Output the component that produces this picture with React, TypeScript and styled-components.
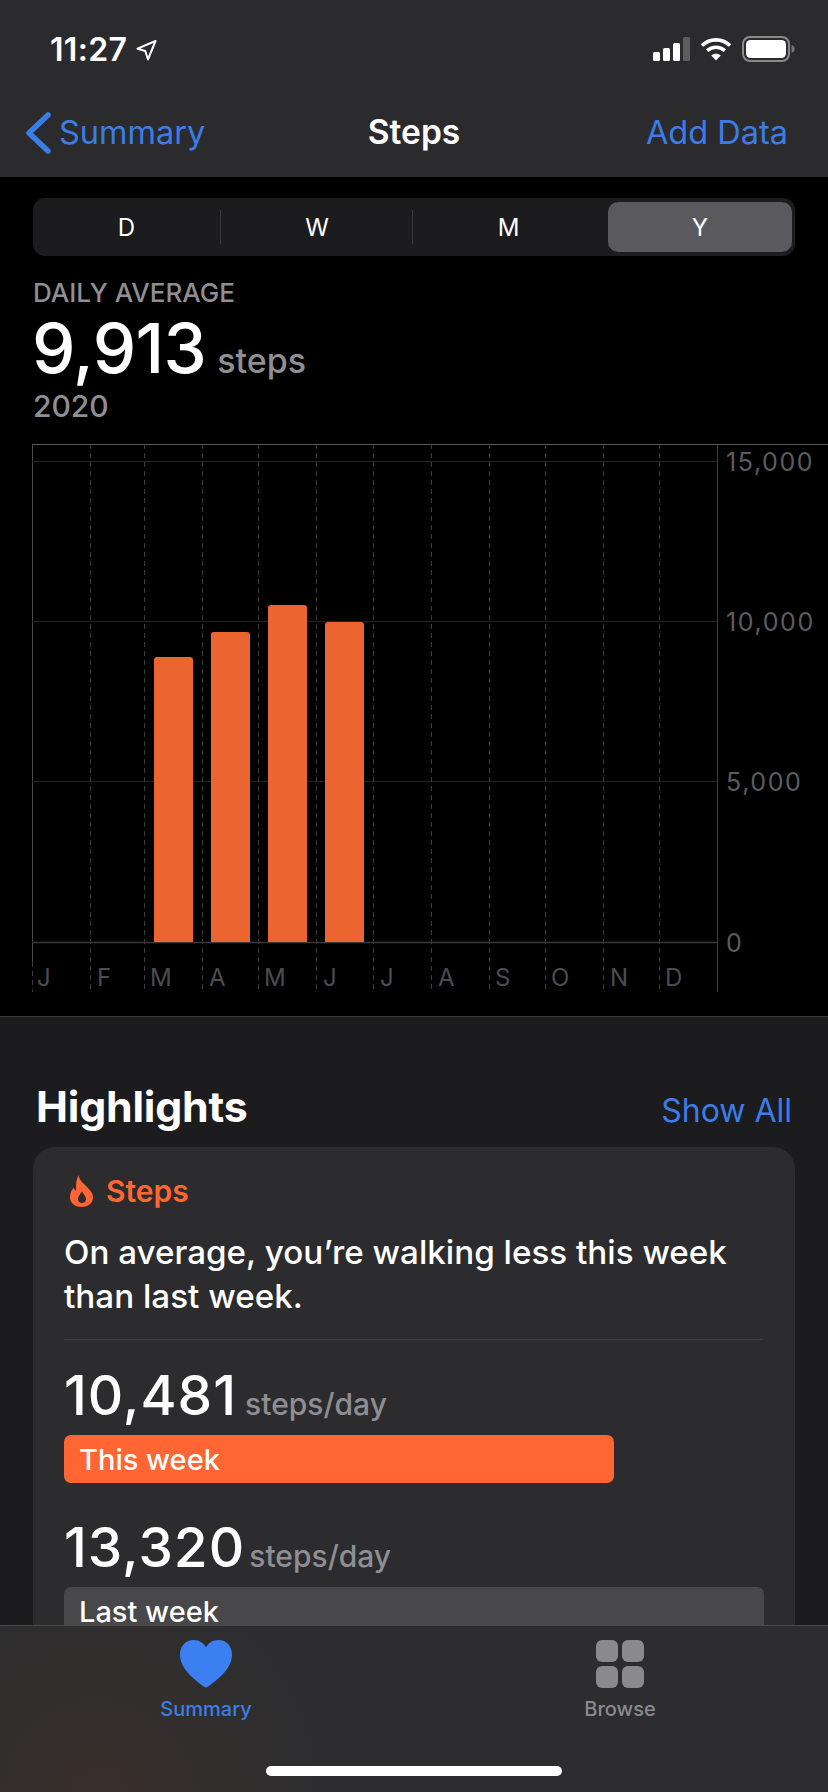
import { createGlobalStyle, styled } from "styled-components";

const sans = `Inter, "Noto Sans", "Liberation Sans", sans-serif`;
const blue = "#3b7de6";
const orange = "#ff6633";

const GlobalStyle = createGlobalStyle`
	html, body {
		margin: 0;
		padding: 0;
		background: #1c1c1e;
	}
	* {
		box-sizing: border-box;
	}
`;

const Screen = styled.div`
	position: relative;
	width: 828px;
	height: 1792px;
	overflow: hidden;
	background: #1c1c1e;
	color: #fff;
	font-family: ${sans};
`;

const Header = styled.header`
	height: 177px;
	background: #2b2b2d;
`;

const StatusBar = styled.div`
	height: 88px;
	padding: 36px 33px 0 50px;
	display: flex;
	justify-content: space-between;
	align-items: flex-start;
`;

const TimeGroup = styled.div`
	display: flex;
	align-items: center;
	gap: 9px;
`;

const Time = styled.span`
	font-size: 32px;
	line-height: 28px;
	font-weight: 600;
	letter-spacing: 0.3px;
`;

const StatusIcons = styled.div`
	display: flex;
	align-items: center;
	gap: 10px;
`;

const NavBar = styled.nav`
	height: 89px;
	padding: 0 25px;
	display: grid;
	grid-template-columns: 1fr auto 1fr;
	align-items: center;
`;

const BackLink = styled.div`
	display: flex;
	align-items: center;
	gap: 8px;
	color: ${blue};
	font-size: 32.5px;
`;

const NavTitle = styled.div`
	padding-bottom: 2px;
	font-size: 33.5px;
	font-weight: 600;
`;

const NavAction = styled.div`
	justify-self: end;
	margin-right: 15px;
	color: ${blue};
	font-size: 32.5px;
`;

const ChartSection = styled.section`
	height: 840px;
	background: #000;
	padding-top: 21px;
	border-bottom: 1px solid #3a3a3c;
`;

const Segmented = styled.div`
	width: 762px;
	height: 58px;
	margin-left: 33px;
	padding: 4px 3px;
	display: grid;
	grid-template-columns: 185px 192px 195px 184px;
	background: #1c1c1e;
	border-radius: 12px;
`;

const Segment = styled.div<{ $active?: boolean; $divided?: boolean; $inset?: number }>`
	position: relative;
	display: flex;
	align-items: center;
	justify-content: center;
	padding-right: ${(p) => p.$inset ?? 0}px;
	font-size: 24px;
	font-weight: 400;
	border-radius: 10px;
	background: ${(p) => (p.$active ? "#5a5a5e" : "transparent")};

	${(p) =>
		p.$divided &&
		`&::after {
			content: "";
			position: absolute;
			right: 0;
			top: 8px;
			bottom: 8px;
			width: 1px;
			background: #3a3a3c;
		}`}
`;

const AverageBlock = styled.div`
	padding: 22px 0 0 33px;
`;

const AverageLabel = styled.div`
	color: #8e8e93;
	font-size: 26px;
	line-height: 30px;
	font-weight: 550;
`;

const AverageRow = styled.div`
	display: flex;
	align-items: baseline;
	gap: 11px;
	height: 80px;
	padding-top: 6px;
`;

const AverageValue = styled.span`
	margin-left: -1px;
	font-size: 69px;
	line-height: 68px;
	font-weight: 450;
	letter-spacing: -0.6px;
`;

const AverageUnit = styled.span`
	color: #8e8e93;
	font-size: 34px;
	font-weight: 500;
`;

const AverageYear = styled.div`
	color: #8e8e93;
	font-size: 30px;
	line-height: 36px;
	font-weight: 500;
`;

const ChartSvg = styled.svg`
	display: block;
	margin-top: 20px;
`;

const AxisText = styled.text`
	fill: #5c5c60;
	font-family: ${sans};
	font-size: 25px;
	letter-spacing: 1.6px;
`;

const MonthText = styled.text`
	fill: #4c4c50;
	font-family: ${sans};
	font-size: 24px;
`;

const Highlights = styled.section`
	padding: 64px 33px 0;
`;

const HighlightsHead = styled.div`
	display: flex;
	justify-content: space-between;
	align-items: flex-start;
	padding: 0 3px;
	height: 66px;
`;

const HighlightsTitle = styled.h2`
	margin: 0;
	font-size: 42.8px;
	line-height: 52px;
	font-weight: 700;
	letter-spacing: -0.2px;
`;

const ShowAll = styled.div`
	margin-top: 4px;
	color: ${blue};
	font-size: 32px;
	line-height: 52px;
`;

const Card = styled.article`
	height: 600px;
	padding: 27px 32px 0 31px;
	background: #2c2c2e;
	border-radius: 22px;
`;

const CardHead = styled.div`
	display: flex;
	align-items: center;
	gap: 12px;
	padding-left: 6px;
	color: ${orange};
	font-size: 30px;
	line-height: 34px;
	font-weight: 600;
`;

const CardText = styled.p`
	margin: 22px 0 0;
	padding-bottom: 21px;
	border-bottom: 1px solid #3f3f41;
	font-size: 33.2px;
	line-height: 44px;
	font-weight: 500;
`;

const Metric = styled.div<{ $gap: number }>`
	display: flex;
	align-items: baseline;
	gap: ${(p) => p.$gap}px;
	height: 65px;
`;

const MetricValue = styled.span`
	font-size: 55px;
	line-height: 64px;
	font-weight: 500;
	letter-spacing: 1px;
`;

const MetricUnit = styled.span`
	color: #8e8e93;
	font-size: 30px;
	font-weight: 500;
`;

const MetricGroup = styled.div<{ $gap: number }>`
	margin-top: ${(p) => p.$gap}px;
`;

const WeekBar = styled.div<{ $width: number; $color: string }>`
	width: ${(p) => p.$width}px;
	height: 48px;
	margin-top: 7px;
	padding-left: 15px;
	display: flex;
	align-items: center;
	background: ${(p) => p.$color};
	border-radius: 7px;
	font-size: 29px;
	font-weight: 500;
`;

const TabBar = styled.nav`
	position: absolute;
	left: 0;
	right: 0;
	bottom: 0;
	height: 167px;
	padding-top: 14px;
	display: grid;
	grid-template-columns: 412px 416px;
	background: radial-gradient(circle at 100px 170px, #38302c 0, #2d2d2f 220px);
	border-top: 1px solid #4a4a4c;
`;

const Tab = styled.div<{ $active?: boolean }>`
	display: flex;
	flex-direction: column;
	align-items: center;
	gap: 8px;
	color: ${(p) => (p.$active ? blue : "#8a8a8e")};
	font-size: 20px;
	line-height: 26px;
	font-weight: 500;
`;

const BrowseGrid = styled.div`
	display: grid;
	grid-template-columns: repeat(2, 22px);
	grid-template-rows: repeat(2, 22px);
	gap: 4px;
	width: 48px;
	height: 48px;
`;

const BrowseCell = styled.span`
	background: #8a8a8e;
	border-radius: 6px;
`;

const HomeIndicator = styled.div`
	position: absolute;
	left: 266px;
	bottom: 16px;
	width: 296px;
	height: 10px;
	border-radius: 5px;
	background: #fff;
`;

const dashes = [90, 144, 202, 258, 316, 373, 431, 489, 545, 603, 659];
const grid = [
	{ y: 17, label: "15,000" },
	{ y: 177, label: "10,000" },
	{ y: 337, label: "5,000" },
	{ y: 498, label: "0" },
];
const months = ["J", "F", "M", "A", "M", "J", "J", "A", "S", "O", "N", "D"];
const monthX = [37, 97, 150, 209, 264, 323, 380, 438, 495, 551, 610, 665];
const bars = [
	{ x: 154, top: 213 },
	{ x: 211, top: 188 },
	{ x: 268, top: 161 },
	{ x: 325, top: 178 },
];

function Chart() {
	return (
		<ChartSvg width="828" height="550" viewBox="0 0 828 550">
			<line x1="32" y1="0.5" x2="828" y2="0.5" stroke="#5a5a5c" />
			<line x1="32.5" y1="0" x2="32.5" y2="518" stroke="#4a4a4c" />
			<line x1="32.5" y1="518" x2="32.5" y2="548" stroke="#3a3a3c" strokeDasharray="5 4" />
			<line x1="717.5" y1="0" x2="717.5" y2="548" stroke="#3f3f41" />
			{grid.map((g) => (
				<line key={g.y} x1="32" y1={g.y + 0.5} x2="717" y2={g.y + 0.5} stroke={g.y === 498 ? "#38383a" : "#232325"} strokeWidth={g.y === 498 ? 1.5 : 1} />
			))}
			{dashes.map((x) => (
				<line key={x} x1={x + 0.5} y1="0" x2={x + 0.5} y2="548" stroke="#3a3a3c" strokeDasharray="5 4" />
			))}
			{bars.map((b) => (
				<path
					key={b.x}
					d={`M${b.x} 498V${b.top + 3}a3 3 0 0 1 3-3h33a3 3 0 0 1 3 3V498Z`}
					fill="#ec6430"
				/>
			))}
			{grid.map((g) => (
				<AxisText key={g.label} x="726" y={g.y + 10}>
					{g.label}
				</AxisText>
			))}
			{months.map((m, i) => (
				<MonthText key={i} x={monthX[i]} y="542">
					{m}
				</MonthText>
			))}
		</ChartSvg>
	);
}

export default function App() {
	return (
		<Screen>
			<GlobalStyle />
			<Header>
				<StatusBar>
					<TimeGroup>
						<Time>11:27</Time>
						<svg width="21" height="21" viewBox="0 0 21 21" fill="none">
							<path d="M19.5 1 1.500 8.700 9.300 11 12 19.500Z" stroke="#fff" strokeWidth="2" strokeLinejoin="round" />
						</svg>
					</TimeGroup>
					<StatusIcons>
						<svg width="37" height="24" viewBox="0 0 37 24">
							<rect x="0" y="15" width="7" height="9" rx="1.5" fill="#fff" />
							<rect x="10" y="11" width="7" height="13" rx="1.5" fill="#fff" />
							<rect x="20" y="6" width="7" height="18" rx="1.5" fill="#fff" />
							<rect x="30" y="0" width="7" height="24" rx="1.5" fill="#5e5e60" />
						</svg>
						<svg width="32" height="24" viewBox="0 0 32 24" fill="none" stroke="#fff" strokeWidth="3.6">
							<path d="M2 8.5C10 1 22 1 30 8.5" />
							<path d="M7.2 13.6c5-4.5 12.6-4.5 17.6 0" />
							<path d="M16 23.5l-4.8-5c2.7-2.4 6.9-2.4 9.6 0Z" fill="#fff" stroke="none" />
						</svg>
						<svg width="53" height="26" viewBox="0 0 53 26" fill="none">
							<rect x="1" y="1" width="46" height="24" rx="7" stroke="#8b8b8d" strokeWidth="2" />
							<rect x="4" y="4" width="40" height="18" rx="4.5" fill="#fff" />
							<path d="M49.5 9v8c2-.6 3.2-2.2 3.2-4s-1.200-3.400-3.200-4Z" fill="#77777a" />
						</svg>
					</StatusIcons>
				</StatusBar>
				<NavBar>
					<BackLink>
						<svg width="26" height="42" viewBox="0 0 26 42" fill="none">
							<path d="M23 3 4 21l19 18" stroke={blue} strokeWidth="5.5" strokeLinecap="round" strokeLinejoin="round" />
						</svg>
						Summary
					</BackLink>
					<NavTitle>Steps</NavTitle>
					<NavAction>Add Data</NavAction>
				</NavBar>
			</Header>

			<ChartSection>
				<Segmented>
					<Segment $divided $inset={4}>D</Segment>
					<Segment $divided>W</Segment>
					<Segment $inset={4}>M</Segment>
					<Segment $active>Y</Segment>
				</Segmented>
				<AverageBlock>
					<AverageLabel>DAILY AVERAGE</AverageLabel>
					<AverageRow>
						<AverageValue>9,913</AverageValue>
						<AverageUnit>steps</AverageUnit>
					</AverageRow>
					<AverageYear>2020</AverageYear>
				</AverageBlock>
				<Chart />
			</ChartSection>

			<Highlights>
				<HighlightsHead>
					<HighlightsTitle>Highlights</HighlightsTitle>
					<ShowAll>Show All</ShowAll>
				</HighlightsHead>
				<Card>
					<CardHead>
						<svg width="24" height="32" viewBox="0 0 24 32">
							<path
								fillRule="evenodd"
								d="M8.500 0c.8 5 4.200 7.500 8 11.500 4 4.200 6.500 7 6.500 11 0 5.600-4.800 9.500-11.500 9.500S0 28 0 22c0-4.200 1.800-7 3.800-9.500.4 1.500 1 2.600 2.200 3.400C6 10 6 5 8.500 0ZM12 16c-1 3-4 5-4 8.200 0 2.300 1.700 3.800 4 3.800s4-1.500 4-3.800c0-3.200-3-5.200-4-8.200Z"
								fill={orange}
							/>
						</svg>
						Steps
					</CardHead>
					<CardText>
						On average, you’re walking less this week
						<br />
						than last week.
					</CardText>
					<MetricGroup $gap={23}>
						<Metric $gap={8}>
							<MetricValue>10,481</MetricValue>
							<MetricUnit>steps/day</MetricUnit>
						</Metric>
						<WeekBar $width={550} $color={orange}>This week</WeekBar>
					</MetricGroup>
					<MetricGroup $gap={32}>
						<Metric $gap={4}>
							<MetricValue>13,320</MetricValue>
							<MetricUnit>steps/day</MetricUnit>
						</Metric>
						<WeekBar $width={700} $color="#48484a">Last week</WeekBar>
					</MetricGroup>
				</Card>
			</Highlights>

			<TabBar>
				<Tab $active>
					<svg width="52" height="48" viewBox="0 0 52 48">
						<path
							d="M26 47.500c-1 0-2-.6-3-1.400C14 39 0 29 0 14.500 0 6 6 0 13.500 0 19 0 23.500 2.800 26 7.200 28.500 2.800 33 0 38.500 0 46 0 52 6 52 14.500 52 29 38 39 29 46.100c-1 .8-2 1.400-3 1.400Z"
							fill="#3b7ff0"
						/>
					</svg>
					Summary
				</Tab>
				<Tab>
					<BrowseGrid>
						<BrowseCell />
						<BrowseCell />
						<BrowseCell />
						<BrowseCell />
					</BrowseGrid>
					Browse
				</Tab>
			</TabBar>
			<HomeIndicator />
		</Screen>
	);
}
